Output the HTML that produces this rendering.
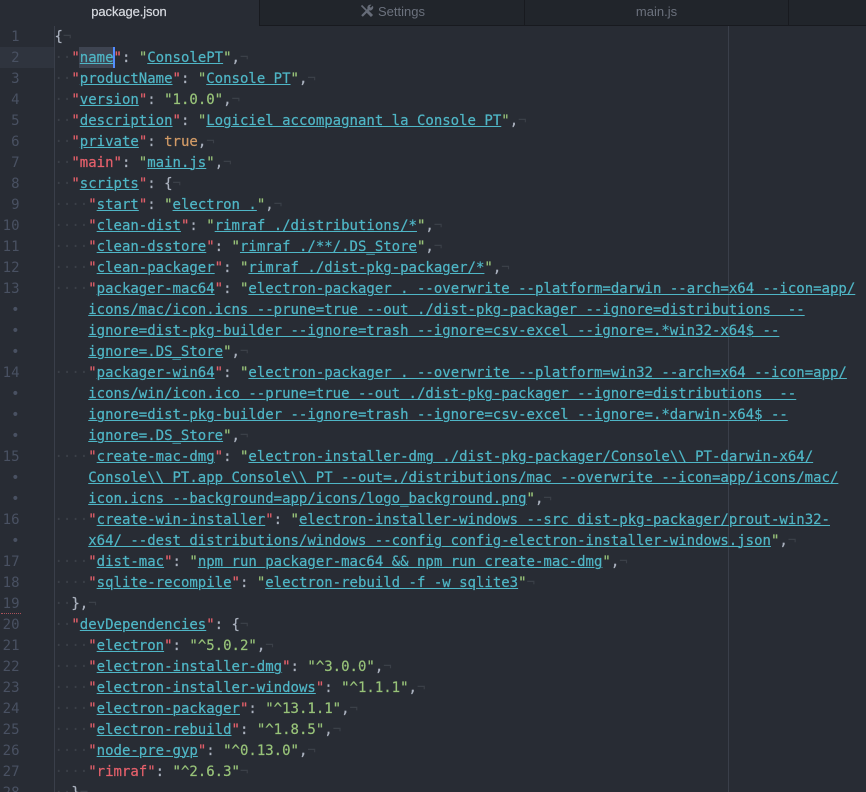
<!DOCTYPE html>
<html><head><meta charset="utf-8"><style>
html,body{margin:0;padding:0;background:#282c34;width:866px;height:792px;overflow:hidden}
#p{position:relative;width:866px;height:792px;overflow:hidden;background:#282c34}
.tabbar{position:absolute;left:0;top:0;width:866px;height:25px;background:#21252b;border-bottom:1px solid #181a1f}
.t{position:absolute;top:0;height:25px;font:13px/23px "Liberation Sans",sans-serif;color:#6b717d;text-align:center;border-right:1px solid #181a1f;box-sizing:border-box}
.l{position:absolute;left:54.5px;margin-top:1px;height:21px;font:14px/21px "DejaVu Sans Mono",monospace;white-space:pre;color:#abb2bf;-webkit-text-stroke:.2px currentColor}
.n{position:absolute;left:0;margin-top:1px;width:19.5px;height:21px;text-align:right;font:14px/21px "DejaVu Sans Mono",monospace;color:#495162}
i{font-style:normal;color:#3b4048;-webkit-text-stroke:0}
b{font-weight:normal;color:#e5606b}
em{font-style:normal;color:#98c379}
u{color:#4fb6c6;text-decoration:underline;text-underline-offset:1px;text-decoration-thickness:1px}
s{text-decoration:none;color:#d19a66}
</style></head><body><div id="p">
<div style="position:absolute;left:0;top:47px;width:54px;height:21px;background:#2f343e"></div>
<div style="position:absolute;left:79px;top:47px;width:34px;height:21px;background:#3e4451"></div>
<div style="position:absolute;left:113px;top:47px;width:2px;height:21px;background:#528bff"></div>
<div style="position:absolute;left:54px;top:26px;width:1px;height:766px;background:#3a3f4a"></div>
<div style="position:absolute;left:728px;top:26px;width:1px;height:766px;background:#3a3f4a"></div>
<div style="position:absolute;left:1px;top:613px;width:20px;height:0;border-top:1px dotted #a9525a"></div>
<div class="tabbar"></div>
<div class="t" style="left:0;width:260px;height:26px;background:#282c34;color:#d7dae0;border-right:1px solid #181a1f;letter-spacing:-.1px;-webkit-text-stroke:.2px currentColor;padding-right:1px">package.json</div>
<div class="t" style="left:260px;width:265px"><svg width="14" height="14" viewBox="0 0 14 14" style="position:absolute;left:100px;top:4px"><g fill="none" stroke="#666c78" stroke-linecap="butt"><path d="M1.5 1.5L7 7" stroke-width="1.6"/><path d="M6.5 6.5L12 12" stroke-width="3"/><path d="M2 12L8.5 5.5" stroke-width="2.2"/></g><path d="M12.8 1.8L10.8 3.8L9.6 2.6L11.4 .8A3.2 3.2 0 0 0 7.4 4.6L9 6.4A3.2 3.2 0 0 0 12.8 1.8Z" fill="#666c78"/></svg><span style="position:absolute;left:118px;top:0">Settings</span></div>
<div class="t" style="left:525px;width:264px">main.js</div>
<div class="n" style="top:26px">1</div>
<div class="n" style="top:47px">2</div>
<div class="n" style="top:68px">3</div>
<div class="n" style="top:89px">4</div>
<div class="n" style="top:110px">5</div>
<div class="n" style="top:131px">6</div>
<div class="n" style="top:152px">7</div>
<div class="n" style="top:173px">8</div>
<div class="n" style="top:194px">9</div>
<div class="n" style="top:215px">10</div>
<div class="n" style="top:236px">11</div>
<div class="n" style="top:257px">12</div>
<div class="n" style="top:278px">13</div>
<div class="n" style="top:299px">•</div>
<div class="n" style="top:320px">•</div>
<div class="n" style="top:341px">•</div>
<div class="n" style="top:362px">14</div>
<div class="n" style="top:383px">•</div>
<div class="n" style="top:404px">•</div>
<div class="n" style="top:425px">•</div>
<div class="n" style="top:446px">15</div>
<div class="n" style="top:467px">•</div>
<div class="n" style="top:488px">•</div>
<div class="n" style="top:509px">16</div>
<div class="n" style="top:530px">•</div>
<div class="n" style="top:551px">17</div>
<div class="n" style="top:572px">18</div>
<div class="n" style="top:593px">19</div>
<div class="n" style="top:614px">20</div>
<div class="n" style="top:635px">21</div>
<div class="n" style="top:656px">22</div>
<div class="n" style="top:677px">23</div>
<div class="n" style="top:698px">24</div>
<div class="n" style="top:719px">25</div>
<div class="n" style="top:740px">26</div>
<div class="n" style="top:761px">27</div>
<div class="n" style="top:782px">28</div>
<div class="l" style="top:26px">{<i>¬</i></div>
<div class="l" style="top:47px"><i>··</i><b>"</b><u>name</u><b>"</b>: <em>"</em><u>ConsolePT</u><em>"</em>,<i>¬</i></div>
<div class="l" style="top:68px"><i>··</i><b>"</b><u>productName</u><b>"</b>: <em>"</em><u>Console PT</u><em>"</em>,<i>¬</i></div>
<div class="l" style="top:89px"><i>··</i><b>"</b><u>version</u><b>"</b>: <em>"1.0.0"</em>,<i>¬</i></div>
<div class="l" style="top:110px"><i>··</i><b>"</b><u>description</u><b>"</b>: <em>"</em><u>Logiciel accompagnant la Console PT</u><em>"</em>,<i>¬</i></div>
<div class="l" style="top:131px"><i>··</i><b>"</b><u>private</u><b>"</b>: <s>true</s>,<i>¬</i></div>
<div class="l" style="top:152px"><i>··</i><b>"main"</b>: <em>"</em><u>main.js</u><em>"</em>,<i>¬</i></div>
<div class="l" style="top:173px"><i>··</i><b>"</b><u>scripts</u><b>"</b>: {<i>¬</i></div>
<div class="l" style="top:194px"><i>····</i><b>"</b><u>start</u><b>"</b>: <em>"</em><u>electron .</u><em>"</em>,<i>¬</i></div>
<div class="l" style="top:215px"><i>····</i><b>"</b><u>clean-dist</u><b>"</b>: <em>"</em><u>rimraf ./distributions/*</u><em>"</em>,<i>¬</i></div>
<div class="l" style="top:236px"><i>····</i><b>"</b><u>clean-dsstore</u><b>"</b>: <em>"</em><u>rimraf ./**/.DS_Store</u><em>"</em>,<i>¬</i></div>
<div class="l" style="top:257px"><i>····</i><b>"</b><u>clean-packager</u><b>"</b>: <em>"</em><u>rimraf ./dist-pkg-packager/*</u><em>"</em>,<i>¬</i></div>
<div class="l" style="top:278px"><i>····</i><b>"</b><u>packager-mac64</u><b>"</b>: <em>"</em><u>electron-packager . --overwrite --platform=darwin --arch=x64 --icon=app/</u></div>
<div class="l" style="top:299px">    <u>icons/mac/icon.icns --prune=true --out ./dist-pkg-packager --ignore=distributions  --</u></div>
<div class="l" style="top:320px">    <u>ignore=dist-pkg-builder --ignore=trash --ignore=csv-excel --ignore=.*win32-x64$ --</u></div>
<div class="l" style="top:341px">    <u>ignore=.DS_Store</u><em>"</em>,<i>¬</i></div>
<div class="l" style="top:362px"><i>····</i><b>"</b><u>packager-win64</u><b>"</b>: <em>"</em><u>electron-packager . --overwrite --platform=win32 --arch=x64 --icon=app/</u></div>
<div class="l" style="top:383px">    <u>icons/win/icon.ico --prune=true --out ./dist-pkg-packager --ignore=distributions  --</u></div>
<div class="l" style="top:404px">    <u>ignore=dist-pkg-builder --ignore=trash --ignore=csv-excel --ignore=.*darwin-x64$ --</u></div>
<div class="l" style="top:425px">    <u>ignore=.DS_Store</u><em>"</em>,<i>¬</i></div>
<div class="l" style="top:446px"><i>····</i><b>"</b><u>create-mac-dmg</u><b>"</b>: <em>"</em><u>electron-installer-dmg ./dist-pkg-packager/Console\\ PT-darwin-x64/</u></div>
<div class="l" style="top:467px">    <u>Console\\ PT.app Console\\ PT --out=./distributions/mac --overwrite --icon=app/icons/mac/</u></div>
<div class="l" style="top:488px">    <u>icon.icns --background=app/icons/logo_background.png</u><em>"</em>,<i>¬</i></div>
<div class="l" style="top:509px"><i>····</i><b>"</b><u>create-win-installer</u><b>"</b>: <em>"</em><u>electron-installer-windows --src dist-pkg-packager/prout-win32-</u></div>
<div class="l" style="top:530px">    <u>x64/ --dest distributions/windows --config config-electron-installer-windows.json</u><em>"</em>,<i>¬</i></div>
<div class="l" style="top:551px"><i>····</i><b>"</b><u>dist-mac</u><b>"</b>: <em>"</em><u>npm run packager-mac64 &amp;&amp; npm run create-mac-dmg</u><em>"</em>,<i>¬</i></div>
<div class="l" style="top:572px"><i>····</i><b>"</b><u>sqlite-recompile</u><b>"</b>: <em>"</em><u>electron-rebuild -f -w sqlite3</u><em>"</em><i>¬</i></div>
<div class="l" style="top:593px"><i>··</i>},<i>¬</i></div>
<div class="l" style="top:614px"><i>··</i><b>"</b><u>devDependencies</u><b>"</b>: {<i>¬</i></div>
<div class="l" style="top:635px"><i>····</i><b>"</b><u>electron</u><b>"</b>: <em>"^5.0.2"</em>,<i>¬</i></div>
<div class="l" style="top:656px"><i>····</i><b>"</b><u>electron-installer-dmg</u><b>"</b>: <em>"^3.0.0"</em>,<i>¬</i></div>
<div class="l" style="top:677px"><i>····</i><b>"</b><u>electron-installer-windows</u><b>"</b>: <em>"^1.1.1"</em>,<i>¬</i></div>
<div class="l" style="top:698px"><i>····</i><b>"</b><u>electron-packager</u><b>"</b>: <em>"^13.1.1"</em>,<i>¬</i></div>
<div class="l" style="top:719px"><i>····</i><b>"</b><u>electron-rebuild</u><b>"</b>: <em>"^1.8.5"</em>,<i>¬</i></div>
<div class="l" style="top:740px"><i>····</i><b>"</b><u>node-pre-gyp</u><b>"</b>: <em>"^0.13.0"</em>,<i>¬</i></div>
<div class="l" style="top:761px"><i>····</i><b>"rimraf"</b>: <em>"^2.6.3"</em><i>¬</i></div>
<div class="l" style="top:782px"><i>··</i>}<i>¬</i></div>
</div></body></html>
